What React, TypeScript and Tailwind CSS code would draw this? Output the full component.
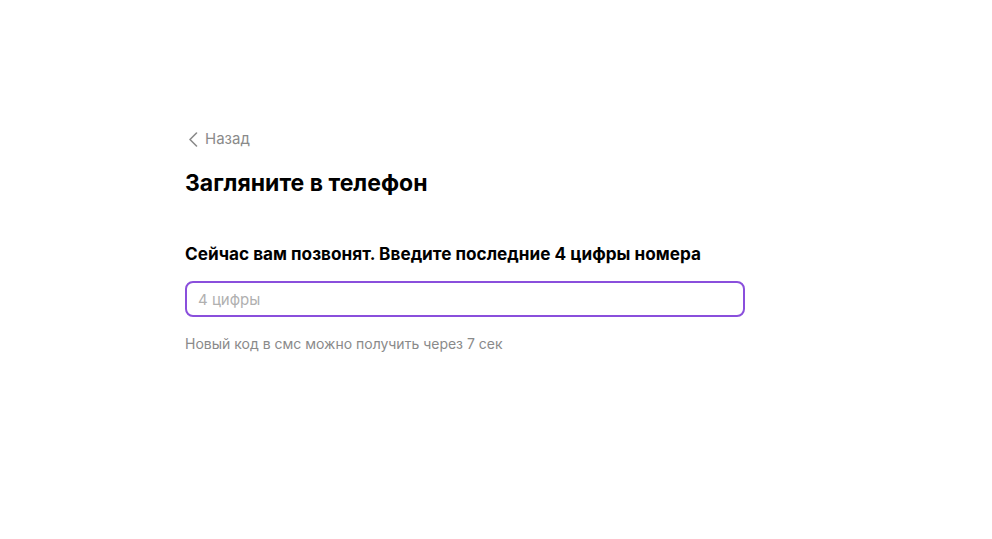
export default function App() {
  return (
    <div className="min-h-[539px] w-full bg-white font-['Inter',sans-serif] text-black">
      <div className="ml-[185px] flex w-[560px] flex-col pt-[129px]">
        <button className="flex items-center gap-[7px] self-start pl-[3px] text-[15px] leading-5 text-[#8a8a8a]">
          <svg width="10" height="15" viewBox="0 0 10 15" fill="none" aria-hidden>
            <path d="M8.5 1L2 7.5L8.5 14" stroke="#8a8a8a" strokeWidth="1.6" strokeLinecap="round" strokeLinejoin="round" />
          </svg>
          Назад
        </button>
        <h1 className="mt-[20px] text-[23px] font-bold leading-7">Загляните в телефон</h1>
        <p className="mt-[45px] text-[17.2px] font-bold leading-6">
          Сейчас вам позвонят. Введите последние 4 цифры номера
        </p>
        <input
          autoFocus
          placeholder="4 цифры"
          className="mt-[15px] h-[36px] w-[560px] rounded-[8px] border-2 border-[#8a4fdc] px-[11px] text-[15px] text-black caret-black outline-none placeholder:text-[#b0b0b0]"
        />
        <p className="mt-[17px] text-[14px] leading-5 text-[#8a8a8a]">
          Новый код в смс можно получить через 7 сек
        </p>
      </div>
    </div>
  )
}
